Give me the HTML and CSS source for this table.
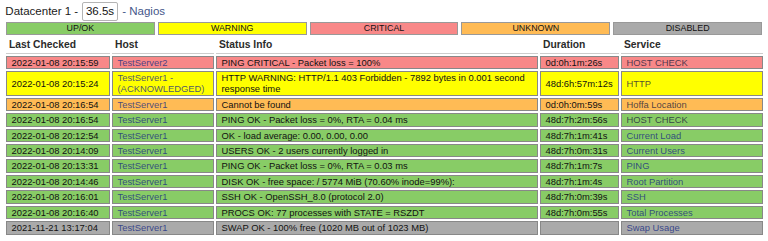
FILE: index.html
```html
<!DOCTYPE html>
<html>
<head>
<meta charset="utf-8">
<link rel="stylesheet" href="styles.css">
</head>
<body>
<div class="title">Datacenter 1 - <span class="timer">36.5s</span> <a class="nagios">- Nagios</a></div>
<div class="statusbar">
  <div class="sb ok">UP/OK</div>
  <div class="sb warn">WARNING</div>
  <div class="sb crit">CRITICAL</div>
  <div class="sb unk">UNKNOWN</div>
  <div class="sb dis">DISABLED</div>
</div>
<table class="services">
  <colgroup>
    <col class="c-last"><col class="c-host"><col class="c-info"><col class="c-dur"><col class="c-svc">
  </colgroup>
  <thead>
    <tr><th>Last Checked</th><th>Host</th><th>Status Info</th><th>Duration</th><th>Service</th></tr>
  </thead>
  <tbody>
    <tr class="crit"><td>2022-01-08 20:15:59</td><td><a class="host">TestServer2</a></td><td>PING CRITICAL - Packet loss = 100%</td><td>0d:0h:1m:26s</td><td><a class="svc dark">HOST CHECK</a></td></tr>
    <tr class="warn"><td>2022-01-08 20:15:24</td><td><a class="host">TestServer1 - (ACKNOWLEDGED)</a></td><td>HTTP WARNING: HTTP/1.1 403 Forbidden - 7892 bytes in 0.001 second response time</td><td>48d:6h:57m:12s</td><td><a class="svc dark">HTTP</a></td></tr>
    <tr class="unk"><td>2022-01-08 20:16:54</td><td><a class="host">TestServer1</a></td><td>Cannot be found</td><td>0d:0h:0m:59s</td><td><a class="svc dark">Hoffa Location</a></td></tr>
    <tr class="ok"><td>2022-01-08 20:16:54</td><td><a class="host">TestServer1</a></td><td>PING OK - Packet loss = 0%, RTA = 0.04 ms</td><td>48d:7h:2m:56s</td><td><a class="svc dark">HOST CHECK</a></td></tr>
    <tr class="ok"><td>2022-01-08 20:12:54</td><td><a class="host">TestServer1</a></td><td>OK - load average: 0.00, 0.00, 0.00</td><td>48d:7h:1m:41s</td><td><a class="svc">Current Load</a></td></tr>
    <tr class="ok"><td>2022-01-08 20:14:09</td><td><a class="host">TestServer1</a></td><td>USERS OK - 2 users currently logged in</td><td>48d:7h:0m:31s</td><td><a class="svc">Current Users</a></td></tr>
    <tr class="ok"><td>2022-01-08 20:13:31</td><td><a class="host">TestServer1</a></td><td>PING OK - Packet loss = 0%, RTA = 0.03 ms</td><td>48d:7h:1m:7s</td><td><a class="svc">PING</a></td></tr>
    <tr class="ok"><td>2022-01-08 20:14:46</td><td><a class="host">TestServer1</a></td><td>DISK OK - free space: / 5774 MiB (70.60% inode=99%):</td><td>48d:7h:1m:4s</td><td><a class="svc">Root Partition</a></td></tr>
    <tr class="ok"><td>2022-01-08 20:16:01</td><td><a class="host">TestServer1</a></td><td>SSH OK - OpenSSH_8.0 (protocol 2.0)</td><td>48d:7h:0m:39s</td><td><a class="svc">SSH</a></td></tr>
    <tr class="ok"><td>2022-01-08 20:16:40</td><td><a class="host">TestServer1</a></td><td>PROCS OK: 77 processes with STATE = RSZDT</td><td>48d:7h:0m:55s</td><td><a class="svc">Total Processes</a></td></tr>
    <tr class="dis"><td>2021-11-21 13:17:04</td><td><a class="host">TestServer1</a></td><td>SWAP OK - 100% free (1020 MB out of 1023 MB)</td><td></td><td><a class="svc">Swap Usage</a></td></tr>
  </tbody>
</table>
</body>
</html>
```

FILE: styles.css
```css
html, body {
  background: #ffffff;
}
body {
  margin: 0 5.33px;
  font-family: "Liberation Sans", Arial, sans-serif;
  color: #222;
}
.title {
  margin-top: 1.7px;
  height: 19px;
  line-height: 19px;
  font-size: 11.5px;
  color: #1a1a1a;
  white-space: nowrap;
}
.timer {
  display: inline-block;
  box-sizing: border-box;
  height: 19px;
  line-height: 17px;
  padding: 0 3px;
  margin-left: 0.5px;
  border: 1px solid #b4b4b4;
  border-radius: 2px;
  vertical-align: top;
  color: #111;
}
.nagios {
  color: #45568a;
  text-decoration: none;
  margin-left: 1px;
}
.statusbar {
  display: flex;
  gap: 3px;
  margin: 1.6px 0.67px 0;
}
.sb {
  flex: 1 1 0;
  box-sizing: border-box;
  height: 13px;
  line-height: 11px;
  border: 1px solid #999;
  text-align: center;
  font-size: 8.9px;
  color: #111;
}
.ok { background: #88cc66; }
.warn { background: #ffff00; }
.crit { background: #f88888; }
.unk { background: #ffbb55; }
.dis { background: #aaaaaa; }

.services {
  table-layout: fixed;
  width: 761px;
  margin: 0.7px 0 0 -1.33px;
  border-collapse: separate;
  border-spacing: 2px;
  font-size: 9.4px;
}
.c-last { width: 104px; }
.c-host { width: 102px; }
.c-info { width: 322px; }
.c-dur { width: 79px; }
.c-svc { width: 142px; }

.services th {
  text-align: left;
  font-weight: bold;
  font-size: 10.3px;
  color: #2b2b2b;
  line-height: 14.67px;
  padding: 0 3px;
  border-bottom: 1.33px solid #cdcdcd;
  white-space: nowrap;
}
.services td {
  border: 1px solid #888;
  line-height: 11.4px;
  padding: 0 4.5px;
  vertical-align: middle;
  color: #111;
  overflow: hidden;
}
.host, .svc {
  color: rgba(25, 45, 130, 0.8);
  text-decoration: none;
}
.svc.dark {
  color: rgba(30, 30, 60, 0.8);
}
```
